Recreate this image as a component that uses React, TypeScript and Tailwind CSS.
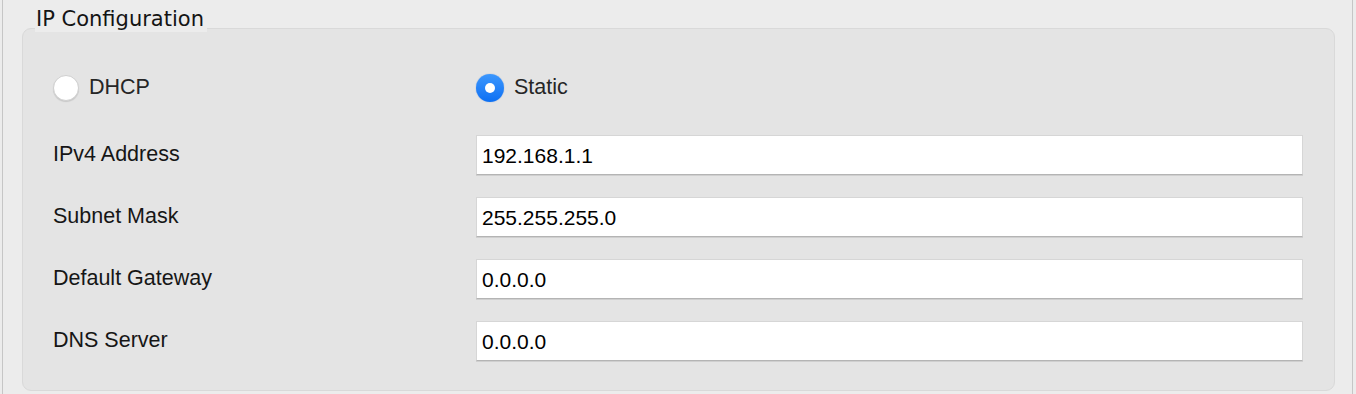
import React from 'react';

const fields = [
  { label: 'IPv4 Address', value: '192.168.1.1' },
  { label: 'Subnet Mask', value: '255.255.255.0' },
  { label: 'Default Gateway', value: '0.0.0.0' },
  { label: 'DNS Server', value: '0.0.0.0' },
];

function Radio({ checked, label }: { checked?: boolean; label: string }) {
  return (
    <label className="flex items-center gap-[10px] h-[40px]">
      {checked ? (
        <span className="flex items-center justify-center w-[28px] h-[28px] rounded-full bg-gradient-to-b from-[#3b97fd] to-[#0b6ff3] shadow-[0_0_1px_rgba(0,80,200,0.6)]">
          <span className="w-[10px] h-[10px] rounded-full bg-white" />
        </span>
      ) : (
        <span className="ml-[1px] w-[26px] h-[26px] rounded-full bg-white border border-[#d0d0d0] shadow-[0_1px_1px_rgba(0,0,0,0.12)]" />
      )}
      <span className="text-[21.5px] leading-none text-[#262626] pb-[1px]">{label}</span>
    </label>
  );
}

export default function App() {
  return (
    <div className="w-[1356px] h-[394px] bg-[#ececec] pl-[2px] pr-[3px] font-['Liberation_Sans',Arial,sans-serif]">
      <div className="h-full border-x border-[#c6c6c6] pl-[19px] pr-[17px]">
        {/* titulo */}
        <div className="relative z-10 ml-[13px] -mb-[4px] w-fit h-[32px] bg-[#ececec] pl-[1px] pr-[3px] pt-[7px]">
          <span className="block font-['DejaVu_Sans',sans-serif] text-[21px] leading-[24px] text-[#141414]">
            IP Configuration
          </span>
        </div>

        {/* painel */}
        <div className="rounded-[9px] border border-[#d9d9d9] bg-[#e4e4e4] pt-[39px] pb-[29px] pl-[29px] pr-[31px]">
          <div className="grid grid-cols-[424px_1fr] mb-[27px]">
            <Radio label="DHCP" />
            <Radio checked label="Static" />
          </div>

          <div className="flex flex-col gap-[22px]">
            {fields.map((f) => (
              <div key={f.label} className="grid grid-cols-[424px_1fr] items-center">
                <span className="pl-[1px] text-[21.5px] leading-none text-[#161616] pb-[1px]">{f.label}</span>
                <input
                  readOnly
                  defaultValue={f.value}
                  className="h-[40px] w-full bg-white border border-[#d6d6d6] border-b-[#b4b4b4] shadow-[0_1px_0_#cfcfcf] pl-[5px] pr-[5px] pt-[1px] text-[21px] text-black outline-none"
                />
              </div>
            ))}
          </div>
        </div>
      </div>
    </div>
  );
}
